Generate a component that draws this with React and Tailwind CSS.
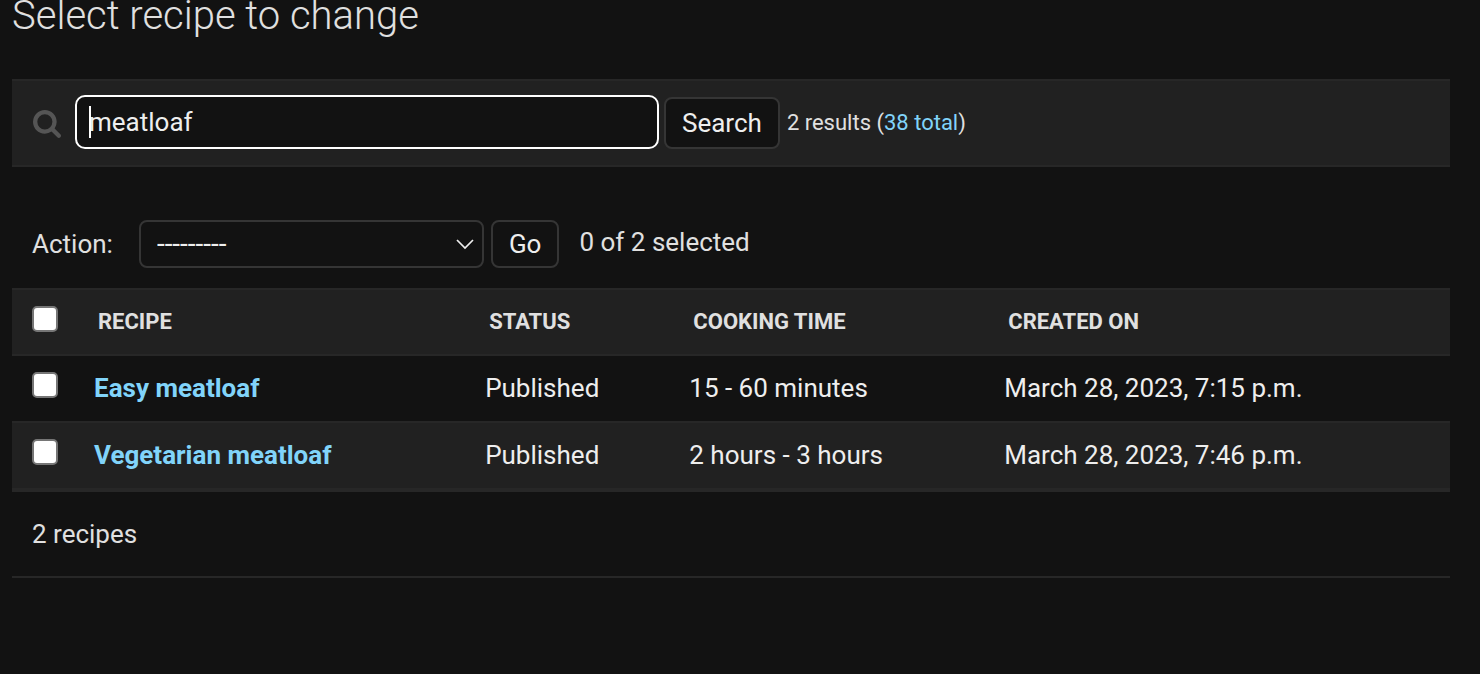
import React, { useState } from "react";

const recipes = [
  { id: 1, name: "Easy meatloaf", status: "Published", time: "15 - 60 minutes", created: "March 28, 2023, 7:15 p.m." },
  { id: 2, name: "Vegetarian meatloaf", status: "Published", time: "2 hours - 3 hours", created: "March 28, 2023, 7:46 p.m." },
];

function SearchIcon() {
  return (
    <svg className="size-7 fill-[#555555]" viewBox="64 128 1664 1664" aria-hidden="true">
      <path d="M1216 832q0-185-131.5-316.5t-316.5-131.5-316.5 131.5-131.5 316.5 131.5 316.5 316.5 131.5 316.5-131.5 131.5-316.5zm512 832q0 52-38 90t-90 38q-54 0-90-38l-343-342q-179 124-399 124-143 0-273.5-55.5t-225-150-150-225-55.5-273.5 55.5-273.5 150-225 225-150 273.5-55.5 273.5 55.5 225 150 150 225 55.5 273.5q0 220-124 399l343 343q37 37 37 90z" />
    </svg>
  );
}

function Checkbox({ label, checked, onChange }) {
  return (
    <input
      type="checkbox"
      aria-label={label}
      checked={checked}
      onChange={onChange}
      className="block size-[26px] appearance-none rounded-[5px] border-2 border-[#767676] bg-white checked:bg-[#81d4fa]"
    />
  );
}

function SearchBar() {
  const [query, setQuery] = useState("meatloaf");
  return (
    <form
      className="mt-[47px] flex h-[88px] items-center border-y-2 border-[#272727] bg-[#212121] pl-[21px]"
      onSubmit={(e) => e.preventDefault()}
    >
      <label htmlFor="searchbar" aria-label="Search recipes" className="mr-3.5 pt-0.5">
        <SearchIcon />
      </label>
      <div className="relative mb-0.5 w-[584px]">
        <input
          id="searchbar"
          type="text"
          value={query}
          onChange={(e) => setQuery(e.target.value)}
          className="block h-[54px] w-full rounded-[10px] border-2 border-white bg-[#121212] px-3 text-[26px] text-[#eeeeee] outline-none"
        />
        <span className="absolute top-[11px] left-3.5 h-8 w-0.5 bg-white" />
      </div>
      <button
        type="submit"
        className="ml-[5px] h-[52px] rounded-lg border-2 border-[#353535] bg-[#121212] px-4 text-[26px] text-[#eeeeee]"
      >
        Search
      </button>
      <span className="ml-[7px] pb-0.5 text-[22px] whitespace-nowrap text-[#e0e0e0]">
        2 results (<a href="#all" className="text-[#81d4fa]">38 total</a>)
      </span>
    </form>
  );
}

function Actions({ count }) {
  return (
    <div className="flex h-[121px] items-center px-5 pt-[33px] text-[26px] text-[#e0e0e0]">
      <label htmlFor="action">Action:</label>
      <div className="relative ml-[26px] w-[345px]">
        <select
          id="action"
          className="block h-12 w-full appearance-none rounded-lg border-2 border-[#353535] bg-[#121212] px-4 text-[28px] text-[#eeeeee]"
        >
          <option>---------</option>
          <option>Delete selected recipes</option>
        </select>
        <svg
          className="pointer-events-none absolute top-[18px] right-2.5 h-3 w-[18px]"
          viewBox="0 0 18 12"
          fill="none"
          stroke="#eeeeee"
          strokeWidth="1.7"
          aria-hidden="true"
        >
          <path d="M1 2 9 10 17 2" />
        </svg>
      </div>
      <button
        type="button"
        className="ml-[7px] h-12 rounded-lg border-2 border-[#353535] bg-[#121212] px-4 text-[#eeeeee]"
      >
        Go
      </button>
      <span className="ml-5 pb-1">{count} of 2 selected</span>
    </div>
  );
}

export default function App() {
  const [selected, setSelected] = useState([]);
  const toggle = (id) =>
    setSelected((s) => (s.includes(id) ? s.filter((x) => x !== id) : [...s, id]));
  const all = selected.length === recipes.length;

  return (
    <main className="min-h-screen bg-[#121212] pr-[30px] pl-3 font-['Roboto','Liberation_Sans',sans-serif] text-[#e0e0e0]">
      <h1 className="text-[40px] leading-8 font-light">Select recipe to change</h1>
      <SearchBar />
      <Actions count={selected.length} />
      <table className="w-full table-fixed border-separate border-spacing-0 text-left">
        <colgroup>
          <col className="w-[66px]" />
          <col className="w-[27.2%]" />
          <col className="w-[14.2%]" />
          <col className="w-[21.9%]" />
          <col />
        </colgroup>
        <thead className="bg-[#212121] text-[22px] leading-8 text-[#e0e0e0] uppercase">
          <tr className="h-[68px] [&>th]:border-y-2 [&>th]:border-[#272727] [&>th]:px-5 [&>th]:font-bold">
            <th className="pt-4 align-top">
              <Checkbox
                label="Select all recipes"
                checked={all}
                onChange={() => setSelected(all ? [] : recipes.map((r) => r.id))}
              />
            </th>
            <th scope="col">Recipe</th>
            <th scope="col">Status</th>
            <th scope="col">Cooking time</th>
            <th scope="col">Created on</th>
          </tr>
        </thead>
        <tbody className="text-[26px] leading-8 text-[#eeeeee]">
          {recipes.map((r) => (
            <tr
              key={r.id}
              className="h-[67px] even:bg-[#212121] [&>*]:border-b-2 [&>*]:border-[#272727] [&>*]:px-4 [&>*]:pb-0.5"
            >
              <td className="align-top">
                <div className="pt-4 pl-1">
                  <Checkbox
                    label={"Select " + r.name}
                    checked={selected.includes(r.id)}
                    onChange={() => toggle(r.id)}
                  />
                </div>
              </td>
              <th scope="row" className="font-bold">
                <a href={"#recipe-" + r.id} className="text-[#81d4fa]">{r.name}</a>
              </th>
              <td>{r.status}</td>
              <td>{r.time}</td>
              <td>{r.created}</td>
            </tr>
          ))}
        </tbody>
      </table>
      <p className="border-y-2 border-[#272727] px-5 py-[26px] text-[26px] leading-8">2 recipes</p>
    </main>
  );
}
